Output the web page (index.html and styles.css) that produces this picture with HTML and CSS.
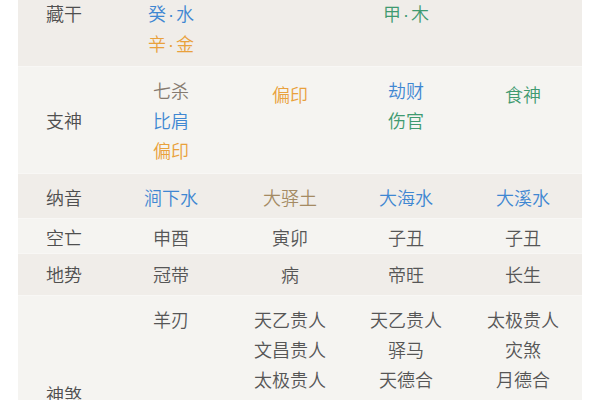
FILE: index.html
```html
<!DOCTYPE html>
<html lang="zh-CN">
<head>
<meta charset="utf-8">
<link rel="stylesheet" href="styles.css">
</head>
<body>
<div class="table">
  <div class="row dark first">
    <div class="label">藏干</div>
    <div class="cell"><span class="earth">己<span class="dot">·</span>土</span><span class="water">癸<span class="dot">·</span>水</span><span class="metal">辛<span class="dot">·</span>金</span></div>
    <div class="cell"><span class="metal">辛<span class="dot">·</span>金</span></div>
    <div class="cell"><span class="water">壬<span class="dot">·</span>水</span><span class="wood">甲<span class="dot">·</span>木</span></div>
    <div class="cell"><span class="wood">乙<span class="dot">·</span>木</span></div>
  </div>
  <div class="row light">
    <div class="label">支神</div>
    <div class="cell"><span class="muted">七杀</span><span class="water">比肩</span><span class="metal">偏印</span></div>
    <div class="cell single"><span class="metal">偏印</span></div>
    <div class="cell"><span class="water">劫财</span><span class="wood">伤官</span></div>
    <div class="cell single"><span class="wood">食神</span></div>
  </div>
  <div class="row dark nayin">
    <div class="label">纳音</div>
    <div class="cell"><span class="water">涧下水</span></div>
    <div class="cell"><span class="earth">大驿土</span></div>
    <div class="cell"><span class="water">大海水</span></div>
    <div class="cell"><span class="water">大溪水</span></div>
  </div>
  <div class="row light kongwang">
    <div class="label">空亡</div>
    <div class="cell"><span class="plain">申酉</span></div>
    <div class="cell"><span class="plain">寅卯</span></div>
    <div class="cell"><span class="plain">子丑</span></div>
    <div class="cell"><span class="plain">子丑</span></div>
  </div>
  <div class="row dark dishi">
    <div class="label">地势</div>
    <div class="cell"><span class="plain">冠带</span></div>
    <div class="cell"><span class="plain">病</span></div>
    <div class="cell"><span class="plain">帝旺</span></div>
    <div class="cell"><span class="plain">长生</span></div>
  </div>
  <div class="row light shensha">
    <div class="label">神煞</div>
    <div class="cell"><span class="plain">羊刃</span></div>
    <div class="cell"><span class="plain">天乙贵人</span><span class="plain">文昌贵人</span><span class="plain">太极贵人</span><span class="plain">国印贵人</span><span class="plain">福星贵人</span><span class="plain">学堂</span></div>
    <div class="cell"><span class="plain">天乙贵人</span><span class="plain">驿马</span><span class="plain">天德合</span><span class="plain">劫煞</span><span class="plain">孤辰</span></div>
    <div class="cell"><span class="plain">太极贵人</span><span class="plain">灾煞</span><span class="plain">月德合</span><span class="plain">天喜</span></div>
  </div>
</div>
</body>
</html>
```
FILE: styles.css
```css
html, body {
  margin: 0;
  padding: 0;
  background: #ffffff;
}
body {
  font-family: "Noto Sans CJK SC", "Noto Sans", sans-serif;
  font-size: 18px;
  font-weight: 350;
  color: #555555;
  overflow: hidden;
}
.table {
  margin: -40px 18px 0 18px;
  width: 564px;
}
.row {
  display: grid;
  grid-template-columns: 92px 122px 116px 116px 118px;
  padding: 8px 0;
  border-top: 1px solid #f8f7f5;
}
.row.first {
  border-top: none;
}
.row.nayin {
  padding: 8px 0 6px;
}
.row.kongwang {
  padding: 3px 0 1px;
}
.row.dishi {
  padding: 5px 0 6px;
}
.row.shensha {
  padding: 8px 0 20px;
}
.dark {
  background: #f0ede9;
}
.light {
  background: #f5f4f1;
}
.label {
  align-self: center;
  text-align: center;
  line-height: 30px;
  color: #4f4f4f;
}
.cell {
  display: flex;
  flex-direction: column;
  align-items: center;
  line-height: 30px;
}
.cell > span {
  display: block;
  height: 30px;
  white-space: nowrap;
}
.cell.single {
  padding-top: 4px;
}
.dot {
  font-family: "Liberation Sans", sans-serif;
  line-height: 0;
  margin: 0 2px;
}
.plain { color: #565656; }
.muted { color: #857a6f; }
.water { color: #3f87d2; }
.metal { color: #e9a13c; }
.wood { color: #3f9a70; }
.earth { color: #a48a63; }
```
